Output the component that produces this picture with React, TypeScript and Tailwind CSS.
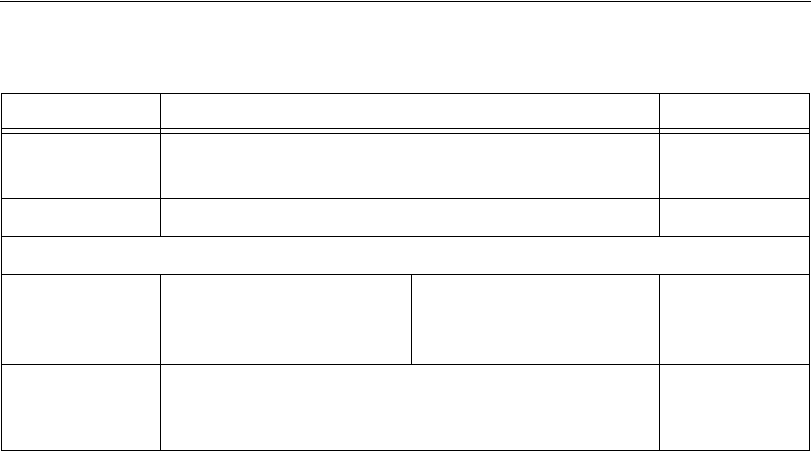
import React from "react";

export default function App() {
  return (
    <div className="w-[811px] h-[451px] bg-white overflow-hidden" style={{ fontFamily: '"Liberation Serif", serif' }}>
      <div className="mt-px h-px w-full bg-black" />
      <div className="mt-[91px] ml-px w-[809px] h-[358px] border border-black flex flex-col">
        {/* header */}
        <div className="flex h-[39px]">
          <div className="w-[159px] border-r border-black flex flex-col">
            <div className="h-[35px] border-b border-black" />
          </div>
          <div className="w-[499px] border-r border-black flex flex-col">
            <div className="h-[35px] border-b border-black" />
          </div>
          <div className="flex-1 flex flex-col">
            <div className="h-[35px] border-b border-black" />
          </div>
        </div>
        {/* row 1 */}
        <div className="flex h-[65px] border-t border-black">
          <div className="w-[159px] border-r border-black" />
          <div className="w-[499px] border-r border-black" />
          <div className="flex-1" />
        </div>
        {/* row 2 */}
        <div className="flex h-[38px] border-t border-black">
          <div className="w-[159px] border-r border-black" />
          <div className="w-[499px] border-r border-black" />
          <div className="flex-1" />
        </div>
        {/* row 3 full span */}
        <div className="h-[38px] border-t border-black" />
        {/* row 4 */}
        <div className="flex h-[90px] border-t border-black">
          <div className="w-[159px] border-r border-black" />
          <div className="w-[251px] border-r border-black" />
          <div className="w-[248px] border-r border-black" />
          <div className="flex-1" />
        </div>
        {/* row 5 */}
        <div className="flex flex-1 border-t border-black">
          <div className="w-[159px] border-r border-black" />
          <div className="w-[499px] border-r border-black" />
          <div className="flex-1" />
        </div>
      </div>
    </div>
  );
}
